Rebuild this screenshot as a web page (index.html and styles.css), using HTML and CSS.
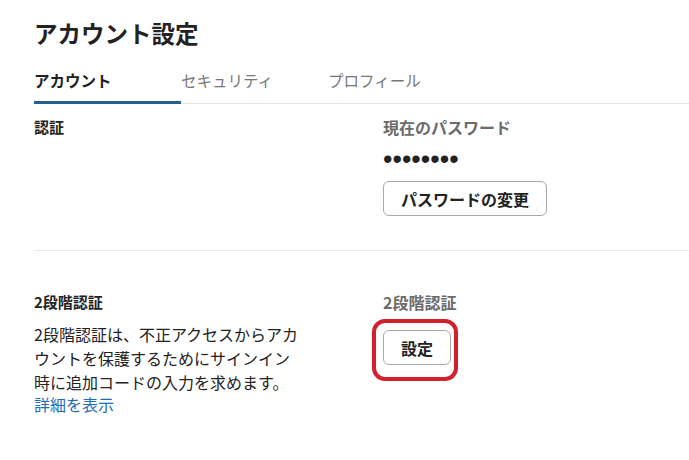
FILE: index.html
```html
<!DOCTYPE html>
<html lang="ja">
<head>
<meta charset="utf-8">
<title>アカウント設定</title>
<link rel="stylesheet" href="styles.css">
</head>
<body>
<main class="page">
  <h1 class="title">アカウント設定</h1>
  <nav class="tabs">
    <a class="tab active">アカウント</a>
    <a class="tab">セキュリティ</a>
    <a class="tab">プロフィール</a>
  </nav>
  <section class="row row-auth">
    <div class="col-left">
      <h2 class="label">認証</h2>
    </div>
    <div class="col-right">
      <div class="field-label">現在のパスワード</div>
      <div class="dots">••••••••</div>
      <button class="btn">パスワードの変更</button>
    </div>
  </section>
  <section class="row row-2fa">
    <div class="col-left">
      <h2 class="label">2段階認証</h2>
      <p class="desc">2段階認証は、不正アクセスからアカウントを保護するためにサインイン時に追加コードの入力を求めます。</p>
      <a class="link">詳細を表示</a>
    </div>
    <div class="col-right">
      <div class="field-label">2段階認証</div>
      <div class="annot">
        <button class="btn btn-set">設定</button>
        <span class="ring"></span>
      </div>
    </div>
  </section>
</main>
</body>
</html>
```
FILE: styles.css
```css
html, body {
  margin: 0;
  background: #ffffff;
}
body {
  font-family: "Noto Sans CJK JP", "Noto Sans", sans-serif;
  color: #222222;
  overflow: hidden;
}
.page {
  padding: 17px 0 0 34px;
}
.title {
  margin: 0;
  font-size: 23.5px;
  line-height: 32px;
  font-weight: 700;
  color: #222222;
}
.tabs {
  display: flex;
  margin-top: 17px;
  border-bottom: 1px solid #e2e2e2;
}
.tab {
  width: 147px;
  padding: 3px 0 10px;
  font-size: 15.5px;
  line-height: 22px;
  color: #777777;
  border-bottom: 3px solid transparent;
  margin-bottom: -1px;
}
.tab.active {
  color: #222222;
  font-weight: 700;
  border-bottom-color: #275f8c;
}
.row {
  display: grid;
  grid-template-columns: 349px 1fr;
}
.row-auth {
  padding: 12px 0 34px;
  border-bottom: 1px solid #e8e8e8;
}
.row-2fa {
  padding-top: 40px;
}
.label {
  margin: 0;
  font-size: 15px;
  line-height: 22px;
  font-weight: 700;
  color: #222222;
}
.field-label {
  font-size: 16px;
  line-height: 22px;
  font-weight: 700;
  color: #6b6b6b;
}
.dots {
  margin-top: 10px;
  font-family: "Liberation Sans", sans-serif;
  font-size: 27px;
  line-height: 22px;
  color: #222222;
}
.col-right {
  display: flex;
  flex-direction: column;
  align-items: flex-start;
}
.btn {
  margin-top: 11px;
  height: 35px;
  padding: 0 17px;
  border: 1px solid #a9a9a9;
  border-radius: 6px;
  background: #ffffff;
  font-family: "Noto Sans CJK JP", sans-serif;
  font-size: 16px;
  font-weight: 700;
  color: #222222;
}
.desc {
  margin: 9px 0 0;
  width: 268px;
  font-size: 16px;
  line-height: 24px;
  color: #222222;
}
.link {
  display: block;
  font-size: 16px;
  line-height: 20px;
  color: #1f6db4;
}
.annot {
  position: relative;
  margin-top: 17px;
}
.btn-set {
  margin-top: 0;
  display: block;
}
.ring {
  position: absolute;
  left: -11px;
  top: -11px;
  right: -7px;
  bottom: -16px;
  border: 4px solid #d3202d;
  border-radius: 13px;
}
```
